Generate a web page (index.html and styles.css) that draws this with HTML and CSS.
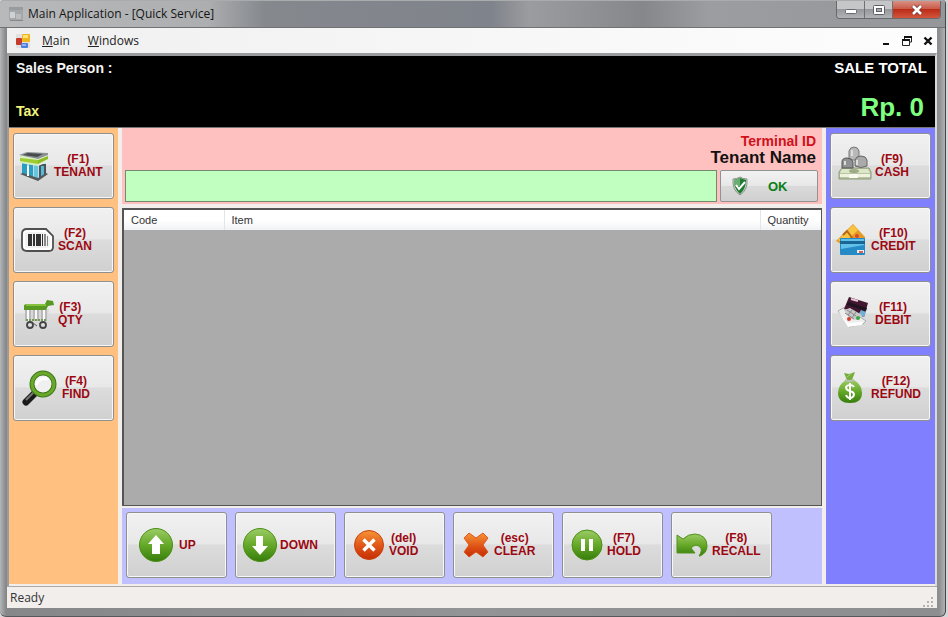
FILE: index.html
```html
<!DOCTYPE html>
<html lang="en">
<head>
<meta charset="utf-8">
<title>Main Application - [Quick Service]</title>
<link rel="stylesheet" href="styles.css">
</head>
<body>
<div class="window">
  <header class="titlebar">
    <svg class="app-icon" width="16" height="16" viewBox="0 0 16 16" aria-hidden="true">
      <rect x="1" y="1" width="14" height="13" fill="#a3a7aa"/><rect x="1" y="1" width="14" height="3" fill="#979ca0"/>
      <rect x="2" y="6" width="5" height="6" fill="#d0d1d2"/><rect x="8" y="8" width="5" height="5" fill="#b9bcbd"/>
      <path d="M2 14h13v1H2z" fill="#888"/>
    </svg>
    <h1 class="title">Main Application - [Quick Service]</h1>
    <div class="caption-buttons">
      <button class="caption" aria-label="Minimize"><svg width="14" height="12" viewBox="0 0 14 12"><rect x="1.500" y="5.500" width="11" height="4" rx="1" fill="#fff" stroke="#666a70"/></svg></button>
      <button class="caption" aria-label="Maximize"><svg width="14" height="12" viewBox="0 0 14 12"><rect x="1.500" y="1.500" width="11" height="9" rx="1" fill="#fff" stroke="#5b5f68"/><rect x="4.500" y="4.500" width="5" height="3" fill="#aaa" stroke="#5b5f68"/></svg></button>
      <button class="caption caption-close" aria-label="Close"><svg width="14" height="12" viewBox="0 0 14 12"><path d="M3 2l8 8M11 2l-8 8" stroke="#7a3b35" stroke-width="4.500"/><path d="M3 2l8 8M11 2l-8 8" stroke="#fff" stroke-width="2.600"/></svg></button>
    </div>
  </header>

  <div class="client">
    <nav class="menubar">
      <svg class="form-icon" width="16" height="16" viewBox="0 0 16 16" aria-hidden="true">
        <rect x="1" y="1" width="14" height="14" fill="#e3e1df"/>
        <rect x="1" y="5" width="6" height="7" rx="1" fill="#c63a2c"/>
        <rect x="7" y="1" width="8" height="8" rx="1" fill="#efb71f"/><rect x="8" y="2" width="5" height="3" fill="#ffe27a"/>
        <rect x="6" y="10" width="7" height="5" rx="1" fill="#4b80dc"/><rect x="7" y="11" width="4" height="2" fill="#8db3f3"/>
      </svg>
      <button class="menu"><u>M</u>ain</button>
      <button class="menu"><u>W</u>indows</button>
      <div class="mdi-buttons">
        <button class="mdi" aria-label="Minimize form"><svg width="12" height="12" viewBox="0 0 12 12"><path d="M3 8h6v2H3z" fill="#111"/></svg></button>
        <button class="mdi" aria-label="Restore form"><svg width="12" height="12" viewBox="0 0 12 12"><path d="M3.500 4V1.500h7V7H8.500" fill="none" stroke="#222"/><path d="M3 1h8v2H3zM1 4h8v2H1z" fill="#111"/><path d="M1.500 5v5.500h7V5" fill="none" stroke="#222"/></svg></button>
        <button class="mdi" aria-label="Close form"><svg width="12" height="12" viewBox="0 0 12 12"><path d="M2.500 2.500l7 7M9.500 2.500l-7 7" stroke="#111" stroke-width="2.400"/></svg></button>
      </div>
    </nav>

    <main class="form">
      <section class="summary">
        <div class="summary-row"><span class="person">Sales Person :</span><span class="total-label">SALE TOTAL</span></div>
        <div class="summary-row"><span class="tax">Tax</span><output class="total">Rp. 0</output></div>
      </section>

      <div class="workspace">
        <aside class="side side-left">
          <button class="key">
            <svg width="36" height="40" viewBox="0 0 36 40" aria-hidden="true">
              <path d="M4 16h24v13l-8 5L4 29z" fill="#bcdde6"/>
              <path d="M4 17h5v12l-5-1zM11 18h4v14l-4-1z" fill="#2b9fc2"/><path d="M16 18h4v15l-4-1z" fill="#67c6de"/>
              <path d="M21 18h7v11l-7 4z" fill="#4a5359"/><path d="M23 20h3v10l-3 2z" fill="#59bad4"/>
              <path d="M2 28l3-1 15 5 8-5 2 1-10 7z" fill="#54595c"/><path d="M9 20h2v10H9z" fill="#fff"/>
              <path d="M2 10l18 2v8L2 17z" fill="#d6eec2"/><path d="M2 12l18 2v4L2 15z" fill="#9ccc2e"/>
              <path d="M20 12l10-4v8l-10 4z" fill="#e5efe0"/><path d="M20 14l10-4v3l-10 5z" fill="#8cbd22"/>
              <path d="M1 9l8-3 21 1v2l-10 4z" fill="#8d9192"/><path d="M5 9l5-2 15 1-6 3z" fill="#474b4d"/>
            </svg>
            <span>(F1)<br>TENANT</span>
          </button>
          <button class="key">
            <svg width="40" height="40" viewBox="0 0 40 40" aria-hidden="true">
              <path d="M9 9h19l7 7v11q0 4-4 4H9q-5 0-5-5V14q0-5 5-5z" fill="#fff" stroke="#505050" stroke-width="1.800"/>
              <path d="M10 12h17l5 5v8q0 3-3 3H10q-3 0-3-3V15q0-3 3-3z" fill="#f2f2f2"/>
              <path d="M10 14h4v12h-4zM15 14h2v12h-2zM18 14h5v12h-5zM24 14h1v12h-1z" fill="#333"/><path d="M26 14h2v12h-2zM29 16h1v10h-1z" fill="#888"/>
            </svg>
            <span>(F2)<br>SCAN</span>
          </button>
          <button class="key">
            <svg width="40" height="40" viewBox="0 0 40 40" aria-hidden="true">
              <path d="M7 15h24l-2 13H8z" fill="#d8d8d8"/>
              <path d="M8 15v12M12 15v12M16 15v12M20 15v12M24 15v12M28 15v12" stroke="#999"/><path d="M10 16v11M18 16v11M26 16v11" stroke="#f9f9f9" stroke-width="2"/>
              <path d="M8 26h20" stroke="#769657" stroke-width="2" stroke-dasharray="2 1"/>
              <path d="M6 12q0-2 3-2h18l2-4 6 1 1 4-6 1-2 4H6z" fill="#589924"/><path d="M8 11h20" stroke="#83c13e" stroke-width="2"/>
              <circle cx="12" cy="31" r="3" fill="#ddd" stroke="#444" stroke-width="1.800"/><circle cx="25" cy="31" r="3" fill="#ddd" stroke="#444" stroke-width="1.800"/><path d="M15 29l4 3M21 29l2 2" stroke="#555"/>
            </svg>
            <span>(F3)<br>QTY</span>
          </button>
          <button class="key">
            <svg width="44" height="40" viewBox="0 0 44 40" aria-hidden="true">
              <path d="M17 25l-9 9" stroke="#1b1b1b" stroke-width="7" stroke-linecap="round"/><path d="M16 24l-8 8" stroke="#777" stroke-width="2"/><path d="M17 26l3-4" stroke="#aaa" stroke-width="4"/>
              <circle cx="25" cy="16" r="11" fill="#f8f8f8" stroke="#3d7815" stroke-width="5"/><circle cx="25" cy="16" r="11" fill="none" stroke="#69a82c" stroke-width="3"/>
              <circle cx="25" cy="16" r="8" fill="#f0f0f0"/><path d="M18 17q3-8 12-6" fill="none" stroke="#fff" stroke-width="3"/>
            </svg>
            <span>(F4)<br>FIND</span>
          </button>
        </aside>

        <section class="center">
          <form class="entry" onsubmit="return false">
            <p class="terminal">Terminal ID</p>
            <p class="tenant">Tenant Name</p>
            <div class="entry-row">
              <input class="code" type="text" aria-label="Item code">
              <button class="ok">
                <svg width="20" height="20" viewBox="0 0 20 20" aria-hidden="true"><path d="M10 1q3 2 7 2 1 11-7 16Q2 14 3 3q4 0 7-2z" fill="#cdd5cd" stroke="#899189"/><path d="M10 2q3 1 6 2 0 9-6 14Q4 13 4 4q3-1 6-2z" fill="#207b35"/><path d="M10 2v8H4q0-3 0-6 3-1 6-2z" fill="#69ad72"/><path d="M6 9l3 4 6-7" fill="none" stroke="#fff" stroke-width="2"/></svg>
                <span>OK</span>
              </button>
            </div>
          </form>

          <div class="grid-view">
            <table class="items">
              <thead><tr><th class="col-code" scope="col">Code</th><th scope="col">Item</th><th class="col-quantity" scope="col">Quantity</th></tr></thead>
              <tbody></tbody>
            </table>
          </div>

          <div class="actions">
            <button class="key">
              <svg width="48" height="40" viewBox="0 0 48 40" aria-hidden="true">
                <defs><linearGradient id="green" x1="0" y1="0" x2="0" y2="1"><stop offset="0" stop-color="#9ccc66"/><stop offset=".5" stop-color="#66a828"/><stop offset="1" stop-color="#367d0b"/></linearGradient>
                <linearGradient id="orange" x1="0" y1="0" x2="0" y2="1"><stop offset="0" stop-color="#f69436"/><stop offset=".55" stop-color="#df5316"/><stop offset="1" stop-color="#c52d05"/></linearGradient></defs>
                <circle cx="25" cy="20" r="16.500" fill="url(#green)" stroke="#4b9016"/><path d="M25 10l8 9h-4v10h-8V19h-4z" fill="#fff"/>
              </svg>
              <span>UP</span>
            </button>
            <button class="key">
              <svg width="40" height="40" viewBox="0 0 40 40" aria-hidden="true"><circle cx="20" cy="20" r="16.500" fill="url(#green)" stroke="#4b9016"/><path d="M20 30l-8-9h4V11h7v10h5z" fill="#fff"/></svg>
              <span>DOWN</span>
            </button>
            <button class="key">
              <svg width="40" height="40" viewBox="0 0 40 40" aria-hidden="true"><circle cx="20" cy="20" r="14.500" fill="url(#orange)" stroke="#c9430f"/><path d="M14.500 14.500l11 11M25.500 14.500l-11 11" stroke="#fff" stroke-width="3.500"/></svg>
              <span>(del)<br>VOID</span>
            </button>
            <button class="key">
              <svg width="36" height="40" viewBox="0 0 36 40" aria-hidden="true"><path d="M6 13l5-5 7 5 7-5 5 5-5 7 5 7-5 5-7-5-7 5-5-5 5-7z" fill="url(#orange)" stroke="#dc5921" stroke-linejoin="round"/></svg>
              <span>(esc)<br>CLEAR</span>
            </button>
            <button class="key">
              <svg width="40" height="40" viewBox="0 0 40 40" aria-hidden="true"><circle cx="20" cy="20" r="15" fill="url(#green)" stroke="#4b9016"/><path d="M14 14h4v12h-4zM22 14h4v12h-4z" fill="#fff"/></svg>
              <span>(F7)<br>HOLD</span>
            </button>
            <button class="key">
              <svg width="36" height="40" viewBox="0 0 36 40" aria-hidden="true"><path d="M1 10l6 4q5-5 12-5 12 1 12 12 0 7-7 10h-1q4-6 1-9-4-4-9 1l4 5H1z" fill="url(#green)" stroke="#52911e" stroke-linejoin="round"/></svg>
              <span>(F8)<br>RECALL</span>
            </button>
          </div>
        </section>

        <aside class="side side-right">
          <button class="key">
            <svg width="40" height="40" viewBox="0 0 40 40" aria-hidden="true">
              <path d="M7 22h27l2 4v7H4v-7z" fill="#b9c5a2" stroke="#8e9979"/><path d="M7 23h26l2 4H5z" fill="#dce6c9"/><path d="M5 28h30v3H5z" fill="#eef2df"/><ellipse cx="19" cy="25" rx="5" ry="2" fill="#9eaa86"/><path d="M14 28h9v4h-9z" fill="#fafbf0"/>
              <path d="M14 5q1-4 5-4t5 4v9H14z" fill="#b8b8b8" stroke="#777"/><path d="M7 16q0-4 5-4t6 4v6H7z" fill="#8f9192" stroke="#555"/><path d="M20 14q1-4 6-4t6 4v6q-6 3-12 0z" fill="#aaa" stroke="#666"/>
              <path d="M17 4v6M22 14v5M10 15v4" stroke="#ddd" stroke-width="2"/>
            </svg>
            <span>(F9)<br>CASH</span>
          </button>
          <button class="key">
            <svg width="36" height="40" viewBox="0 0 36 40" aria-hidden="true">
              <path d="M1 21L18 4l12 13v5L6 24z" fill="#e49a26"/><path d="M3 20L18 5l5 5L9 23z" fill="#f9c441"/><path d="M8 15l4-4 6 8" stroke="#b76a17" stroke-width="2" fill="none"/><circle cx="22" cy="16" r="2" fill="#da472d"/>
              <rect x="5" y="18" width="25" height="17" rx="1" fill="#258bc6"/><path d="M6 19h23v6L6 29z" fill="#62c0e9"/><path d="M5 21h25v3H5z" fill="#176696"/><path d="M22 30h7v3h-7z" fill="#eee"/><path d="M24 31h4v2h-4z" fill="#ce6756"/>
            </svg>
            <span>(F10)<br>CREDIT</span>
          </button>
          <button class="key">
            <svg width="40" height="40" viewBox="0 0 40 40" aria-hidden="true">
              <path d="M3 17l7-4 21 14-3 3-14 3z" fill="#eee" stroke="#aaa"/><path d="M3 17l10 12 15-1-1 3-14 2z" fill="#fff"/>
              <path d="M14 3l19 6-4 14-20-8z" fill="#42172f"/><path d="M13 8l19 6-1 3-19-6z" fill="#1f1520"/><path d="M16 5l7 2" stroke="#e7c9d9" stroke-width="2"/><path d="M26 16l5 2-2 5-6-2z" fill="#73b0d4"/>
              <path d="M9 16l6-2 12 7-4 5-8-1z" fill="#c9c9ca"/><path d="M12 16l9 6M10 19l9 6M17 16l-4 5M21 18l-4 6" stroke="#888"/><circle cx="14" cy="25" r="2" fill="#d63c2c"/><circle cx="23" cy="24" r="2" fill="#36a744"/>
            </svg>
            <span>(F11)<br>DEBIT</span>
          </button>
          <button class="key">
            <svg width="36" height="40" viewBox="0 0 36 40" aria-hidden="true">
              <path d="M9 5l5 1 6-2-3 8h-5z" fill="#76ae3d"/><path d="M12 9l5-4" stroke="#a7d474"/><path d="M11 12h8q8 5 8 13 0 10-12 10T3 25q0-8 8-13z" fill="url(#green)"/><path d="M10 12q4 2 9 0" fill="none" stroke="#bbbfb0" stroke-width="2"/>
              <path d="M19 19q-1-2-4-2t-4 2q0 3 4 4t4 4q-1 3-4 3t-4-3M15 15v17" fill="none" stroke="#fff" stroke-width="2"/>
            </svg>
            <span>(F12)<br>REFUND</span>
          </button>
        </aside>
      </div>
    </main>

    <footer class="status"><span>Ready</span>
      <svg width="12" height="12" viewBox="0 0 12 12" aria-hidden="true"><path d="M8 1h2v2H8zM8 5h2v2H8zM4 5h2v2H4zM8 9h2v2H8zM4 9h2v2H4zM0 9h2v2H0z" fill="#b5b3b2"/></svg>
    </footer>
  </div>
</div>
</body>
</html>
```
FILE: styles.css
```css
* { box-sizing: border-box; }

body {
  margin: 0;
  background: #d5d7d8;
  font-family: "Liberation Sans", Arial, sans-serif;
}

button { margin: 0; padding: 0; font: inherit; }
svg { display: block; flex: none; }

.window {
  display: flex;
  flex-direction: column;
  min-height: 100vh;
  margin-right: 2px;
  padding: 0 8px 8px 7px;
  border-right: 1px solid #45484b;
  border-bottom: 1px solid #55595b;
  border-radius: 4px 4px 6px 6px;
  background: linear-gradient(90deg, #b4b7b9, #858789 6px, #929496 50%, #8c8e90 calc(100% - 6px), #b0b1b2);
}

.titlebar {
  display: flex;
  align-items: center;
  height: 28px;
  margin: 0 -8px 0 -7px;
  padding: 0 4px 0 8px;
  border-top: 1px solid #a9abad;
  border-bottom: 1px solid #707274;
  border-radius: 4px 4px 0 0;
  background: linear-gradient(90deg, #b7b9ba, #acaeb0 22%, #85888d 28%, #7f838b 52%, #9b9c9f 56%, #85878b 68%, #9c9da0 75%, #94969a);
}

.title {
  margin: 0 0 0 4px;
  color: #161616;
  font: 400 12px/16px "Open Sans", sans-serif;
}

.caption-buttons {
  display: flex;
  align-self: flex-start;
  margin-left: auto;
  border: 1px solid #666a6d;
  border-top: 0;
  border-radius: 0 0 4px 4px;
  overflow: hidden;
}

.caption {
  display: flex;
  align-items: center;
  justify-content: center;
  width: 28px;
  height: 17px;
  border: 0;
  border-right: 1px solid #6f7275;
  background: linear-gradient(#c4c6c8 45%, #96999c 50%, #b1b3b6);
}

.caption-close {
  width: 47px;
  border-right: 0;
  background: linear-gradient(#d99185, #ca5b49 45%, #bb2d19 50%, #d2553c);
}

.client {
  display: flex;
  flex: 1;
  flex-direction: column;
  background: #f1eeec;
}

.menubar {
  display: flex;
  align-items: center;
  height: 25px;
  padding: 0 3px 0 8px;
  background: linear-gradient(90deg, #f0f0f0, #fdfdfd);
  font: 12px/16px "Open Sans", sans-serif;
}

.menu {
  margin-left: 11px;
  border: 0;
  background: none;
  color: #222;
}

.menu + .menu { margin-left: 18px; }

.mdi-buttons { display: flex; gap: 9px; margin-left: auto; }
.mdi { border: 0; background: none; }

.form {
  display: flex;
  flex: 1;
  flex-direction: column;
  border: 2px solid #999b9c;
  border-top-width: 3px;
  border-right-color: #d9d9d9;
  border-bottom: 0;
}

.summary {
  display: flex;
  flex-direction: column;
  justify-content: space-between;
  height: 72px;
  padding: 4px 8px 4px 7px;
  border-bottom: 1px solid #777;
  background: #000;
  color: #fff;
  font-weight: 700;
}

.summary-row {
  display: flex;
  align-items: center;
  justify-content: space-between;
}

.person, .tax { font-size: 14px; line-height: 16px; }
.person { color: #f3f3f3; }
.tax { padding-top: 8px; color: #f3f37c; }
.total-label { font-size: 15px; line-height: 16px; }
.total { padding-right: 3px; color: #7fff80; font-size: 26px; line-height: 32px; }

.workspace {
  display: flex;
  flex: 1;
  gap: 4px;
  padding-bottom: 2px;
}

.side {
  display: flex;
  flex: none;
  flex-direction: column;
  gap: 8px;
  width: 109px;
  padding: 5px 4px;
}

.side-left { background: #ffc080; }
.side-right { background: #8080ff; }

.key {
  display: flex;
  flex: none;
  align-items: center;
  width: 101px;
  height: 66px;
  padding-left: 4px;
  border: 1px solid #8e8f8f;
  border-radius: 3px;
  background: linear-gradient(#f1f1f1, #e8e8e8 48%, #dcdcdc 50%, #d0d0d0);
  box-shadow: inset 0 0 0 1px #f7f7f7;
  color: #9c0812;
  font-size: 12px;
  font-weight: 700;
  line-height: 13px;
  text-align: center;
}

.center {
  display: flex;
  flex: 1;
  flex-direction: column;
  min-width: 0;
}

.entry {
  padding: 5px 4px 2px 3px;
  background: #ffc0c0;
  font-weight: 700;
  text-align: right;
}

.terminal, .tenant { margin: 0; padding-right: 2px; }
.terminal { color: #d01119; font-size: 14px; line-height: 16px; }
.tenant { color: #111; font-size: 17px; line-height: 18px; }

.entry-row { display: flex; gap: 3px; margin-top: 3px; }

.code {
  flex: 1;
  min-width: 0;
  height: 32px;
  border: 1px solid #718b71;
  background: #c0ffc0;
}

.ok {
  display: flex;
  align-items: center;
  gap: 18px;
  width: 98px;
  height: 32px;
  padding-left: 9px;
  border: 1px solid #929292;
  border-radius: 2px;
  background: linear-gradient(#f2f2f2, #e8e8e8 48%, #dadada 50%, #d0d0d0);
  color: #078016;
  font-size: 13px;
  font-weight: 700;
}

.grid-view {
  flex: 1;
  margin: 4px 0 2px;
  border: 2px solid #555;
  border-right-width: 1px;
  border-bottom-width: 1px;
  background: #ababab;
}

.items {
  width: 100%;
  border-collapse: collapse;
  table-layout: fixed;
}

.items th {
  height: 20px;
  padding: 0 7px;
  border-right: 1px solid #e4e5e6;
  background: linear-gradient(#fff 50%, #f1f2f4);
  color: #333;
  font-size: 11px;
  font-weight: 400;
  text-align: left;
}

.items .col-code { width: 100px; }
.items .col-quantity { width: 61px; border-right: 0; }

.actions {
  display: flex;
  gap: 8px;
  padding: 4px 4px 6px;
  background: #c0c0ff;
}

.status {
  display: flex;
  align-items: center;
  justify-content: space-between;
  height: 22px;
  padding: 0 2px 0 3px;
  border-top: 1px solid #aaa;
  color: #333;
  font: 12px/16px "Open Sans", sans-serif;
}

.status svg { align-self: flex-end; }
```
